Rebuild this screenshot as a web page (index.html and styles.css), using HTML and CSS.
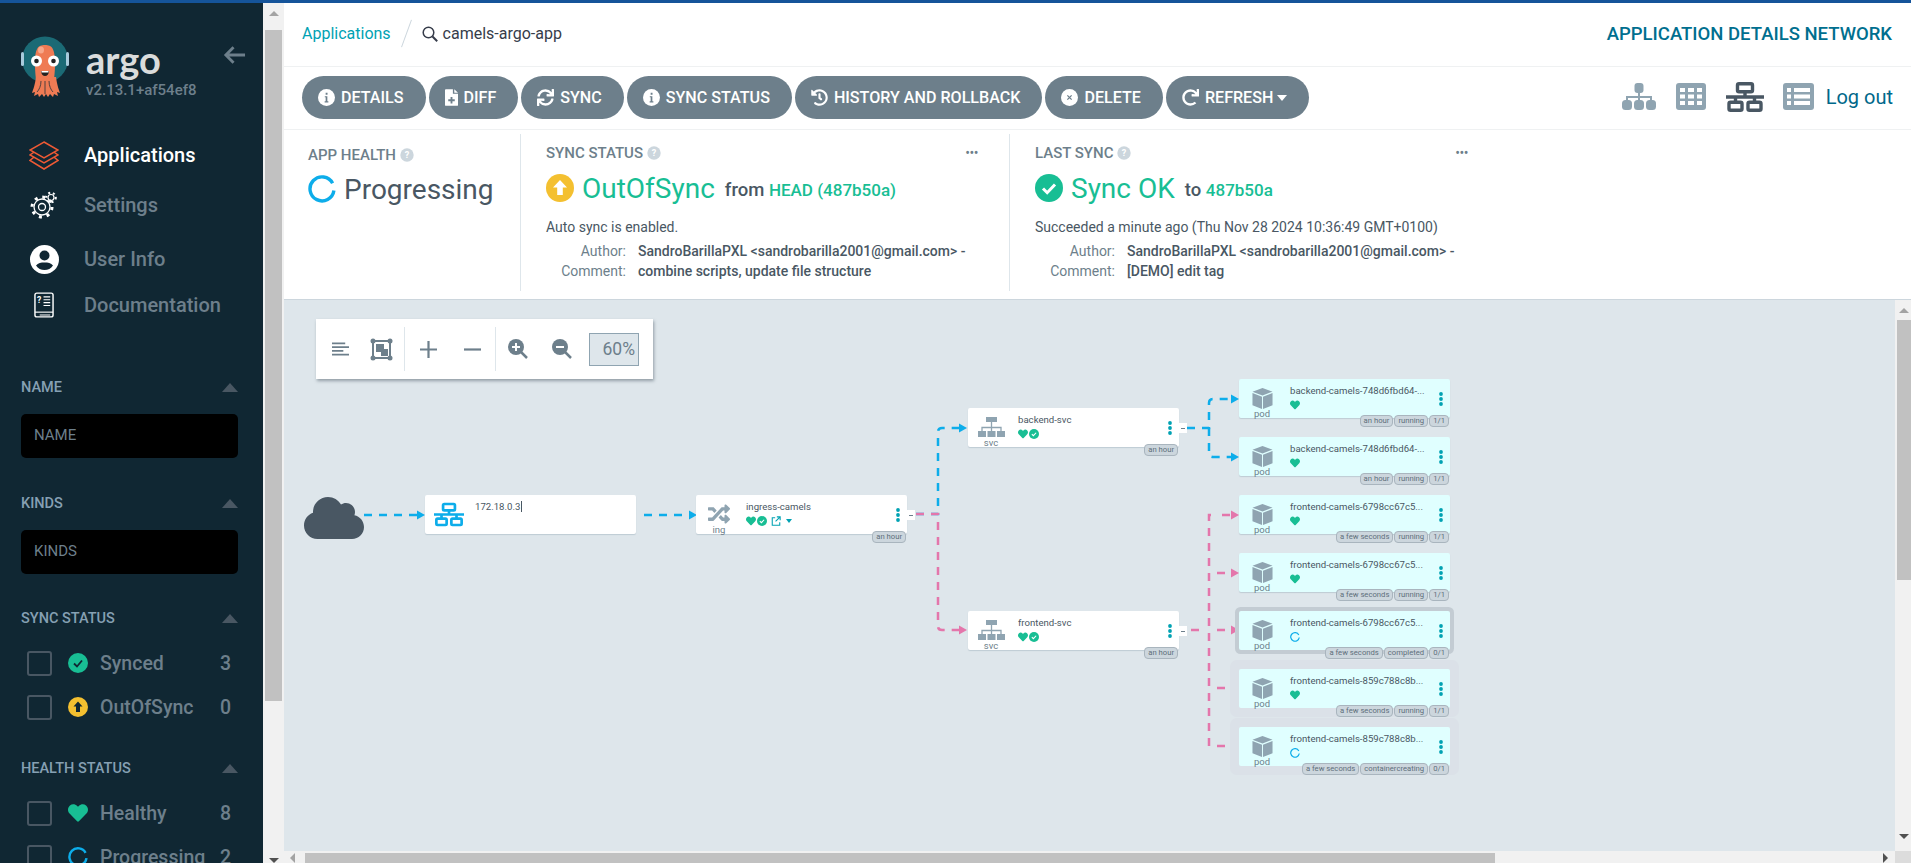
FILE: index.html
```html
<!DOCTYPE html>
<html lang="en">

<head>
    <meta charset="UTF-8">
    <title>camels-argo-app - Argo CD</title>
    <link rel="stylesheet" href="styles.css">
</head>

<body>
    <svg class="icon-defs" xmlns="http://www.w3.org/2000/svg">
        <symbol id="i-heart" viewBox="0 0 512 512"><path d="M462.3 62.6C407.5 15.9 326 24.3 275.7 76.2L256 96.5l-19.7-20.3C186.1 24.3 104.5 15.9 49.7 62.6c-62.8 53.6-66.1 149.8-9.9 207.9l193.5 199.8c12.5 12.9 32.8 12.9 45.3 0l193.5-199.8c56.3-58.1 53-154.3-9.8-207.9z"/></symbol>
        <symbol id="i-check" viewBox="0 0 28 28"><circle cx="14" cy="14" r="14"/><path d="M8 14.5l4.2 4.2L20 10.5" fill="none" stroke="#fff" stroke-width="3"/></symbol>
        <symbol id="i-info" viewBox="0 0 20 20"><circle cx="10" cy="10" r="10" fill="#fff"/><path d="M8 8.5h3v6h1.2v1.3H7.8v-1.3H9V9.8H8zM9 4.5h2.2v2.2H9z" fill="#6d7f8b"/></symbol>
        <symbol id="i-help" viewBox="0 0 14 14"><circle cx="7" cy="7" r="6.7" fill="#ccd6dd"/><text x="7" y="10.3" text-anchor="middle" font-size="9" font-weight="700" fill="#fff">?</text></symbol>
        <symbol id="i-spinner" viewBox="0 0 28 28"><path d="M24.600 8.200A12 12 0 1 0 25.900 15.500" fill="none" stroke="#0dadea" stroke-width="3.400"/></symbol>
        <symbol id="i-sync" viewBox="0 0 512 512"><path d="M440.65 12.57l4 82.77A247.16 247.16 0 0 0 255.83 8C134.73 8 33.91 94.92 12.29 209.82A12 12 0 0 0 24.09 224h49.05a12 12 0 0 0 11.67-9.26 175.91 175.91 0 0 1 317-56.94l-101.46-4.86a12 12 0 0 0-12.57 12v47.41a12 12 0 0 0 12 12H500a12 12 0 0 0 12-12V12a12 12 0 0 0-12-12h-47.37a12 12 0 0 0-11.98 12.57zM255.83 432a175.61 175.61 0 0 1-146-77.8l101.8 4.87a12 12 0 0 0 12.57-12v-47.4a12 12 0 0 0-12-12H12a12 12 0 0 0-12 12V500a12 12 0 0 0 12 12h47.35a12 12 0 0 0 12-12.6l-4.15-82.57A247.17 247.17 0 0 0 255.83 504c121.11 0 221.93-86.92 243.55-201.82a12 12 0 0 0-11.8-14.18h-49.05a12 12 0 0 0-11.67 9.26A175.86 175.86 0 0 1 255.83 432z"/></symbol>
        <symbol id="i-redo" viewBox="0 0 512 512"><path d="M500.33 0h-47.41a12 12 0 0 0-12 12.57l4 82.76A247.42 247.42 0 0 0 256 8C119.34 8 7.9 119.53 8 256.19 8.1 393.07 119.1 504 256 504a247.1 247.1 0 0 0 166.18-63.91 12 12 0 0 0 .48-17.43l-34-34a12 12 0 0 0-16.38-.55A176 176 0 1 1 402.1 157.8l-101.53-4.87a12 12 0 0 0-12.57 12v47.41a12 12 0 0 0 12 12h200.33a12 12 0 0 0 12-12V12a12 12 0 0 0-12-12z"/></symbol>
        <symbol id="i-history" viewBox="0 0 512 512"><path d="M504 255.531c.253 136.64-111.18 248.372-247.82 248.468-59.015.042-113.223-20.53-155.822-54.911-11.077-8.94-11.905-25.541-1.839-35.607l11.267-11.267c8.609-8.609 22.353-9.551 31.891-1.984C173.062 425.135 212.781 440 256 440c101.705 0 184-82.311 184-184 0-101.705-82.311-184-184-184-48.814 0-93.149 18.969-126.068 49.932l50.754 50.754c10.08 10.08 2.941 27.314-11.313 27.314H24c-8.837 0-16-7.163-16-16V38.627c0-14.254 17.234-21.393 27.314-11.314l49.372 49.372C129.209 34.136 189.552 8 256 8c136.81 0 247.747 110.78 248 247.531zm-180.912 78.784l9.823-12.63c8.138-10.463 6.253-25.542-4.21-33.679L288 256.349V152c0-13.255-10.745-24-24-24h-16c-13.255 0-24 10.745-24 24v135.651l65.409 50.874c10.463 8.137 25.541 6.253 33.679-4.21z"/></symbol>
        <symbol id="i-network" viewBox="0 0 38 30"><g fill="none" stroke="currentColor" stroke-width="3.400"><rect x="11.5" y="1.7" width="15" height="8" rx="1.5"/><rect x="3" y="20.3" width="13" height="8" rx="1.5"/><rect x="22" y="20.3" width="13" height="8" rx="1.5"/><path d="M19 10v5M0 15h38M9.5 15v5M28.5 15v5"/></g></symbol>
        <symbol id="i-sitemap" viewBox="0 0 27 20"><path d="M8 0h11v5H8zM0 14h8v6H0zM9.500 14h8v6h-8zM19 14h8v6h-8z"/><path d="M13.500 5v9M4 14v-3.500h19V14" fill="none" stroke="currentColor" stroke-width="1.300"/></symbol>
        <symbol id="i-random" viewBox="0 0 512 512"><path d="M504.971 359.029c9.373 9.373 9.373 24.569 0 33.941l-80 79.984c-15.01 15.01-40.971 4.49-40.971-16.971V416h-58.785a12.004 12.004 0 0 1-8.773-3.812l-70.556-75.596 53.333-57.143L352 336h32v-39.981c0-21.438 25.943-31.998 40.971-16.971l80 79.981zM12 176h84l52.781 56.551 53.333-57.143-70.556-75.596A11.999 11.999 0 0 0 122.785 96H12c-6.627 0-12 5.373-12 12v56c0 6.627 5.373 12 12 12zm372 0v39.984c0 21.46 25.961 31.98 40.971 16.971l80-79.984c9.373-9.373 9.373-24.569 0-33.941l-80-79.981C409.943 24.021 384 34.582 384 56.019V96h-58.785a12.004 12.004 0 0 0-8.773 3.812L96 336H12c-6.627 0-12 5.373-12 12v56c0 6.627 5.373 12 12 12h110.785c3.326 0 6.503-1.381 8.773-3.812L352 176h32z"/></symbol>
        <symbol id="i-cube" viewBox="0 0 21 22"><path d="M10.500 0L21 3.800 10.500 7.800 0 3.800zM0 5.300l10 3.800V22L0 18zM11 9.100l10-3.800V18l-10 4z"/></symbol>
        <symbol id="i-dots" viewBox="0 0 4 14"><circle cx="2" cy="2" r="1.900"/><circle cx="2" cy="7" r="1.900"/><circle cx="2" cy="12" r="1.900"/></symbol>
    </svg>

    <div class="top-line"></div>
    <div class="app">
        <aside class="sidebar">
            <div class="logo-row">
                <svg class="mascot" viewBox="0 0 48 62">
                    <circle cx="24" cy="23.500" r="23" fill="#1b6a75"/>
                    <rect x="0" y="16" width="3" height="14" rx="1.500" fill="#a9cbdc"/>
                    <rect x="45" y="16" width="3" height="14" rx="1.500" fill="#a9cbdc"/>
                    <path d="M14 28C14 12 17 9 24 9s10 3 10 19c0 9-1 14-1 16H15c0-2-1-7-1-16z" fill="#ef7b54"/>
                    <ellipse cx="20" cy="14" rx="3" ry="3.500" fill="#f7a78a"/>
                    <path d="M15 41c-1 8-3 13-4 16l3-1-1 4 4-2 1 3 3-3 2 3 2-3 2 3 2-3 3 3 1-3 4 2-1-4 3 1c-1-3-3-8-4-16z" fill="#ef7b54"/>
                    <path d="M20 45c0 5-2 9-4 11M24 45v13M28 45c0 5 2 9 4 11" fill="none" stroke="#102733" stroke-width="0.700"/>
                    <circle cx="15.500" cy="25" r="5.500" fill="#fff"/>
                    <circle cx="32.500" cy="25" r="5.500" fill="#fff"/>
                    <circle cx="15.500" cy="25" r="2.300" fill="#222"/>
                    <circle cx="32.500" cy="25" r="2.300" fill="#222"/>
                    <path d="M20 35h8c0 3-2 5-4 5s-4-2-4-5z" fill="#222"/>
                    <path d="M20.500 35h7v1.500h-7z" fill="#fff"/>
                </svg>
                <div class="logo-text">
                    <div class="logo-word">argo</div>
                    <div class="logo-version">v2.13.1+af54ef8</div>
                </div>
                <svg class="collapse-arrow" viewBox="0 0 24 20"><path d="M23 10H3M11 2l-8 8 8 8" fill="none" stroke="currentColor" stroke-width="3"/></svg>
            </div>

            <nav class="nav">
                <a class="nav-item nav-item--active">
                    <span class="nav-icon">
                        <svg width="30" height="29" viewBox="0 0 30 29"><path d="M15 1l14 8-14 8-14-8zM4.500 11.500L1 14l14 8 14-8-3.500-2.500M4.500 16.500L1 19.500l14 8.500 14-8.500-3.500-3" fill="none" stroke="#ef5a35" stroke-width="1.500"/></svg>
                    </span>
                    Applications
                </a>
                <a class="nav-item">
                    <span class="nav-icon">
                        <svg width="28" height="28" viewBox="0 0 28 28"><g fill="none" stroke="#fff"><circle cx="12" cy="16" r="8" stroke-width="1.300"/><circle cx="12" cy="16" r="10" stroke-width="3" stroke-dasharray="3 4.850"/><circle cx="12" cy="16" r="3.500" stroke-width="1.300"/><circle cx="21" cy="6.500" r="3" stroke-width="1.200"/><circle cx="21" cy="6.500" r="4.800" stroke-width="2" stroke-dasharray="2 2.800"/></g></svg>
                    </span>
                    Settings
                </a>
                <a class="nav-item nav-item--user">
                    <span class="nav-icon">
                        <svg width="29" height="29" viewBox="0 0 29 29"><circle cx="14.500" cy="14.500" r="14.500" fill="#fff"/><circle cx="14.500" cy="10.500" r="5" fill="#102733"/><path d="M6 20.500c2-2.500 5-3 8.500-3s6.500.5 8.500 3c-2 3-5 4.500-8.500 4.500S8 23.500 6 20.500z" fill="#102733"/></svg>
                    </span>
                    User Info
                </a>
                <a class="nav-item nav-item--docs">
                    <span class="nav-icon">
                        <svg width="20" height="26" viewBox="0 0 21 27"><rect x="1" y="1" width="19" height="25" rx="2" fill="none" stroke="#fff" stroke-width="1.500"/><path d="M1 21h19" stroke="#fff" stroke-width="1.200"/><path d="M10 5h7M10 8h7M10 11h7M10 14h7M6 24h11" stroke="#fff" stroke-width="1.200"/><text x="5.500" y="11" text-anchor="middle" font-size="9" font-weight="700" fill="#fff">?</text></svg>
                    </span>
                    Documentation
                </a>
            </nav>

            <section class="filter filter--name">
                <div class="filter-head"><span>NAME</span><i class="caret-up"></i></div>
                <div class="filter-input">NAME</div>
            </section>
            <section class="filter filter--kinds">
                <div class="filter-head"><span>KINDS</span><i class="caret-up"></i></div>
                <div class="filter-input">KINDS</div>
            </section>
            <section class="filter filter--sync">
                <div class="filter-head"><span>SYNC STATUS</span><i class="caret-up"></i></div>
                <div class="filter-rows">
                    <div class="filter-row">
                        <i class="checkbox"></i>
                        <svg class="filter-icon" viewBox="0 0 20 20"><circle cx="10" cy="10" r="10" fill="#18be94"/><path d="M6 10.500l3 3 5-6" fill="none" stroke="#102733" stroke-width="1.800"/></svg>
                        <span class="filter-label">Synced</span><span class="filter-count">3</span>
                    </div>
                    <div class="filter-row">
                        <i class="checkbox"></i>
                        <svg class="filter-icon" viewBox="0 0 20 20"><circle cx="10" cy="10" r="10" fill="#f4c030"/><path d="M10 4.500l4.500 5H12V15H8V9.500H5.500z" fill="#102733"/></svg>
                        <span class="filter-label">OutOfSync</span><span class="filter-count">0</span>
                    </div>
                </div>
            </section>
            <section class="filter filter--health">
                <div class="filter-head"><span>HEALTH STATUS</span><i class="caret-up"></i></div>
                <div class="filter-rows">
                    <div class="filter-row">
                        <i class="checkbox"></i>
                        <svg class="filter-icon filter-icon--green"><use href="#i-heart"/></svg>
                        <span class="filter-label">Healthy</span><span class="filter-count">8</span>
                    </div>
                    <div class="filter-row">
                        <i class="checkbox"></i>
                        <svg class="filter-icon"><use href="#i-spinner"/></svg>
                        <span class="filter-label">Progressing</span><span class="filter-count">2</span>
                    </div>
                </div>
            </section>
        </aside>

        <div class="side-scroll">
            <div class="arrow-up"></div>
            <div class="side-thumb"></div>
            <div class="arrow-down side-arrow-down"></div>
        </div>

        <main class="main">
            <header class="topbar">
                <div class="crumbs">
                    <a class="crumb-link">Applications</a>
                    <span class="crumb-sep"></span>
                    <svg class="crumb-search" viewBox="0 0 16 16"><circle cx="6.500" cy="6.500" r="5.300" fill="none" stroke="currentColor" stroke-width="1.500"/><path d="M10.500 10.500l4.700 4.700" stroke="currentColor" stroke-width="2"/></svg>
                    <span class="crumb-current">camels-argo-app</span>
                </div>
                <div class="page-title">APPLICATION DETAILS NETWORK</div>
            </header>

            <div class="toolbar">
                <div class="actions">
                    <button class="btn"><svg class="btn-icon"><use href="#i-info"/></svg>DETAILS</button>
                    <button class="btn">
                        <svg class="btn-icon btn-icon--file" viewBox="0 0 14 18"><path d="M1 0h7.500v5H14v12a1 1 0 0 1-1 1H1a1 1 0 0 1-1-1V1a1 1 0 0 1 1-1zM10 0l4 3.800H10z" fill="#fff"/><path d="M6 8.500h2v2.500h2.500v2H8v2.500H6V13H3.500v-2H6z" fill="#6d7f8b"/></svg>
                        DIFF
                    </button>
                    <button class="btn"><svg class="btn-icon"><use href="#i-sync"/></svg>SYNC</button>
                    <button class="btn"><svg class="btn-icon"><use href="#i-info"/></svg>SYNC STATUS</button>
                    <button class="btn"><svg class="btn-icon"><use href="#i-history"/></svg>HISTORY AND ROLLBACK</button>
                    <button class="btn">
                        <svg class="btn-icon" viewBox="0 0 20 20"><circle cx="10" cy="10" r="10" fill="#fff"/><path d="M7.500 7.500l5 5M12.500 7.500l-5 5" stroke="#6d7f8b" stroke-width="1.500"/></svg>
                        DELETE
                    </button>
                    <button class="btn"><svg class="btn-icon"><use href="#i-redo"/></svg>REFRESH<i class="caret-down"></i></button>
                </div>
                <div class="views">
                    <svg class="view-icon view-tree" viewBox="0 0 34 27">
                        <rect x="12.500" y="0" width="9" height="10" rx="3"/>
                        <path d="M17 9v9M5 18v-4h24v4" fill="none" stroke="currentColor" stroke-width="2"/>
                        <rect x="0" y="17" width="10" height="10" rx="3.500"/>
                        <rect x="12" y="17" width="10" height="10" rx="3.500"/>
                        <rect x="24" y="17" width="10" height="10" rx="3.500"/>
                    </svg>
                    <svg class="view-icon view-grid" viewBox="0 0 30 27">
                        <rect width="30" height="27" rx="3"/>
                        <path d="M4 5h5v4H4zM12 5h6v4h-6zM21 5h5v4h-5zM4 11.500h5v4H4zM12 11.500h6v4h-6zM21 11.500h5v4h-5zM4 18h5v4H4zM12 18h6v4h-6zM21 18h5v4h-5z" fill="#fff"/>
                    </svg>
                    <svg class="view-icon view-net"><use href="#i-network"/></svg>
                    <svg class="view-icon view-list" viewBox="0 0 31 27">
                        <rect width="31" height="27" rx="3"/>
                        <path d="M4 5h4v4H4zM11 5h16v4H11zM4 11.500h4v4H4zM11 11.500h16v4H11zM4 18h4v4H4zM11 18h16v4H11z" fill="#fff"/>
                    </svg>
                    <a class="logout">Log out</a>
                </div>
            </div>

            <div class="status">
                <section class="status-panel status-panel--health">
                    <div class="status-title">APP HEALTH<svg class="help"><use href="#i-help"/></svg></div>
                    <div class="status-main status-main--health">
                        <svg class="status-icon"><use href="#i-spinner"/></svg>
                        <span class="status-big status-big--dark">Progressing</span>
                    </div>
                </section>
                <section class="status-panel status-panel--wide">
                    <div class="status-head">
                        <div class="status-title">SYNC STATUS<svg class="help"><use href="#i-help"/></svg></div>
                        <span class="more">•••</span>
                    </div>
                    <div class="status-main">
                        <svg class="status-icon" viewBox="0 0 28 28"><circle cx="14" cy="14" r="14" fill="#f4c030"/><path d="M14 6l7 7.500h-4.200V21h-5.600v-7.500H7z" fill="#fff"/></svg>
                        <span class="status-big">OutOfSync</span>
                        <span class="status-side">from <a>HEAD (487b50a)</a></span>
                    </div>
                    <div class="status-note">Auto sync is enabled.</div>
                    <dl class="meta">
                        <dt>Author:</dt>
                        <dd>SandroBarillaPXL &lt;sandrobarilla2001@gmail.com&gt; -</dd>
                        <dt>Comment:</dt>
                        <dd>combine scripts, update file structure</dd>
                    </dl>
                </section>
                <section class="status-panel status-panel--wide status-panel--last">
                    <div class="status-head">
                        <div class="status-title">LAST SYNC<svg class="help"><use href="#i-help"/></svg></div>
                        <span class="more">•••</span>
                    </div>
                    <div class="status-main">
                        <svg class="status-icon status-icon--ok"><use href="#i-check"/></svg>
                        <span class="status-big">Sync OK</span>
                        <span class="status-side">to <a>487b50a</a></span>
                    </div>
                    <div class="status-note">Succeeded a minute ago (Thu Nov 28 2024 10:36:49 GMT+0100)</div>
                    <dl class="meta">
                        <dt>Author:</dt>
                        <dd>SandroBarillaPXL &lt;sandrobarilla2001@gmail.com&gt; -</dd>
                        <dt>Comment:</dt>
                        <dd>[DEMO] edit tag</dd>
                    </dl>
                </section>
            </div>

            <div class="graph-row">
                <div class="graph">
                    <svg class="edges" viewBox="284 300 1611 551">
                        <g class="edge-blue">
                            <path d="M364 515H417"/>
                            <path d="M644 515H689"/>
                            <path d="M916 514H938V432q0-4 4-4H959"/>
                            <path d="M1187 428H1209V403q0-4 4-4H1231"/>
                            <path d="M1209 428V453q0 4 4 4H1231"/>
                            <polygon points="425,515 417,510.500 417,519.500"/>
                            <polygon points="697,515 689,510.500 689,519.500"/>
                            <polygon points="967,428 959,423.500 959,432.500"/>
                            <polygon points="1239,399 1231,394.500 1231,403.500"/>
                            <polygon points="1239,457 1231,452.500 1231,461.500"/>
                        </g>
                        <g class="edge-pink">
                            <path d="M916 514H938V626q0 4 4 4H959"/>
                            <path d="M1191 630H1203"/>
                            <path d="M1209 746V515H1214"/>
                            <path d="M1222 515H1230M1217 573H1225M1217 630H1225M1217 688H1225M1217 746H1225"/>
                            <polygon points="967,630 959,625.500 959,634.500"/>
                            <polygon points="1239,515 1231,510.500 1231,519.500"/>
                            <polygon points="1239,573 1231,568.500 1231,577.500"/>
                            <polygon points="1239,630 1231,625.500 1231,634.500"/>
                            <polygon points="1239,688 1231,683.500 1231,692.500"/>
                            <polygon points="1239,746 1231,741.500 1231,750.500"/>
                        </g>
                    </svg>

                    <div class="graph-tools">
                        <svg class="tool tool--lines" viewBox="0 0 18 14"><path d="M0 1h14M0 5h18M0 9h12M0 13h18" stroke="currentColor" stroke-width="2" fill="none"/></svg>
                        <svg class="tool tool--frame" viewBox="0 0 23 23"><path d="M3 3h17v17H3z" fill="none" stroke="currentColor" stroke-width="2"/><circle cx="3" cy="3" r="2.500"/><circle cx="20" cy="3" r="2.500"/><circle cx="3" cy="20" r="2.500"/><circle cx="20" cy="20" r="2.500"/><path d="M6 6h8v8H6zM11 11h7v7h-7z"/></svg>
                        <i class="tool-sep"></i>
                        <svg class="tool tool--sign" viewBox="0 0 17 17"><path d="M8.500 0v17M0 8.500h17" stroke="currentColor" stroke-width="2.200"/></svg>
                        <svg class="tool tool--sign" viewBox="0 0 17 17"><path d="M0 8.500h17" stroke="currentColor" stroke-width="2.200"/></svg>
                        <i class="tool-sep tool-sep--second"></i>
                        <svg class="tool tool--zoom" viewBox="0 0 20 20"><circle cx="8" cy="8" r="8"/><path d="M13 13l6 6" stroke="currentColor" stroke-width="2.500"/><path d="M8 4v8M4 8h8" stroke="#fff" stroke-width="2"/></svg>
                        <svg class="tool tool--zoom" viewBox="0 0 20 20"><circle cx="8" cy="8" r="8"/><path d="M13 13l6 6" stroke="currentColor" stroke-width="2.500"/><path d="M4 8h8" stroke="#fff" stroke-width="2"/></svg>
                        <div class="zoom-value">60%</div>
                    </div>

                    <svg class="cloud" viewBox="0 32 640 448"><path d="M537.6 226.6c4.1-10.7 6.4-22.4 6.4-34.6 0-53-43-96-96-96-19.7 0-38.1 6-53.3 16.2C367 64.2 315.3 32 256 32c-88.4 0-160 71.6-160 160 0 2.7.1 5.4.2 8.1C40.2 219.8 0 273.2 0 336c0 79.500 64.500 144 144 144h368c70.700 0 128-57.300 128-128 0-61.900-44-113.600-102.400-125.400z"/></svg>

                    <div class="node node--ip">
                        <div class="node-kind"><svg class="kind-net"><use href="#i-network"/></svg></div>
                        <div class="node-main"><div class="node-name"><span class="ip-text">172.18.0.3</span></div></div>
                    </div>

                    <div class="node node--ingress">
                        <div class="node-kind"><svg class="kind-icon kind-icon--random"><use href="#i-random"/></svg><span>ing</span></div>
                        <div class="node-main">
                            <div class="node-name">ingress-camels</div>
                            <div class="node-status">
                                <svg class="st st--green"><use href="#i-heart"/></svg>
                                <svg class="st st--green"><use href="#i-check"/></svg>
                                <svg class="st st--link" viewBox="0 0 12 12"><path d="M5 2H1.500v9h9V7.500M7 1h4v4M11 1L5.500 6.500" fill="none" stroke="currentColor" stroke-width="1.300"/></svg>
                                <i class="st-caret"></i>
                            </div>
                        </div>
                        <svg class="node-dots"><use href="#i-dots"/></svg>
                        <i class="node-toggle"></i>
                        <div class="tags"><span>an hour</span></div>
                    </div>

                    <div class="node node--backend-svc">
                        <div class="node-kind"><svg class="kind-icon kind-icon--svc"><use href="#i-sitemap"/></svg><span>svc</span></div>
                        <div class="node-main">
                            <div class="node-name">backend-svc</div>
                            <div class="node-status"><svg class="st st--green"><use href="#i-heart"/></svg><svg class="st st--green"><use href="#i-check"/></svg></div>
                        </div>
                        <svg class="node-dots"><use href="#i-dots"/></svg>
                        <i class="node-toggle"></i>
                        <div class="tags"><span>an hour</span></div>
                    </div>

                    <div class="node node--frontend-svc">
                        <div class="node-kind"><svg class="kind-icon kind-icon--svc"><use href="#i-sitemap"/></svg><span>svc</span></div>
                        <div class="node-main">
                            <div class="node-name">frontend-svc</div>
                            <div class="node-status"><svg class="st st--green"><use href="#i-heart"/></svg><svg class="st st--green"><use href="#i-check"/></svg></div>
                        </div>
                        <svg class="node-dots"><use href="#i-dots"/></svg>
                        <i class="node-toggle"></i>
                        <div class="tags"><span>an hour</span></div>
                    </div>

                    <div class="pods">
                        <div class="node node--pod">
                            <div class="node-kind"><svg class="kind-icon kind-icon--cube"><use href="#i-cube"/></svg><span>pod</span></div>
                            <div class="node-main">
                                <div class="node-name">backend-camels-748d6fbd64-...</div>
                                <div class="node-status"><svg class="st st--green"><use href="#i-heart"/></svg></div>
                            </div>
                            <svg class="node-dots"><use href="#i-dots"/></svg>
                            <div class="tags"><span>an hour</span><span>running</span><span>1/1</span></div>
                        </div>
                        <div class="node node--pod">
                            <div class="node-kind"><svg class="kind-icon kind-icon--cube"><use href="#i-cube"/></svg><span>pod</span></div>
                            <div class="node-main">
                                <div class="node-name">backend-camels-748d6fbd64-...</div>
                                <div class="node-status"><svg class="st st--green"><use href="#i-heart"/></svg></div>
                            </div>
                            <svg class="node-dots"><use href="#i-dots"/></svg>
                            <div class="tags"><span>an hour</span><span>running</span><span>1/1</span></div>
                        </div>
                        <div class="node node--pod">
                            <div class="node-kind"><svg class="kind-icon kind-icon--cube"><use href="#i-cube"/></svg><span>pod</span></div>
                            <div class="node-main">
                                <div class="node-name">frontend-camels-6798cc67c5...</div>
                                <div class="node-status"><svg class="st st--green"><use href="#i-heart"/></svg></div>
                            </div>
                            <svg class="node-dots"><use href="#i-dots"/></svg>
                            <div class="tags"><span>a few seconds</span><span>running</span><span>1/1</span></div>
                        </div>
                        <div class="node node--pod">
                            <div class="node-kind"><svg class="kind-icon kind-icon--cube"><use href="#i-cube"/></svg><span>pod</span></div>
                            <div class="node-main">
                                <div class="node-name">frontend-camels-6798cc67c5...</div>
                                <div class="node-status"><svg class="st st--green"><use href="#i-heart"/></svg></div>
                            </div>
                            <svg class="node-dots"><use href="#i-dots"/></svg>
                            <div class="tags"><span>a few seconds</span><span>running</span><span>1/1</span></div>
                        </div>
                        <div class="node node--pod node--selected">
                            <div class="node-kind"><svg class="kind-icon kind-icon--cube"><use href="#i-cube"/></svg><span>pod</span></div>
                            <div class="node-main">
                                <div class="node-name">frontend-camels-6798cc67c5...</div>
                                <div class="node-status"><svg class="st"><use href="#i-spinner"/></svg></div>
                            </div>
                            <svg class="node-dots"><use href="#i-dots"/></svg>
                            <div class="tags"><span>a few seconds</span><span>completed</span><span>0/1</span></div>
                        </div>
                        <div class="node node--pod node--band">
                            <div class="node-kind"><svg class="kind-icon kind-icon--cube"><use href="#i-cube"/></svg><span>pod</span></div>
                            <div class="node-main">
                                <div class="node-name">frontend-camels-859c788c8b...</div>
                                <div class="node-status"><svg class="st st--green"><use href="#i-heart"/></svg></div>
                            </div>
                            <svg class="node-dots"><use href="#i-dots"/></svg>
                            <div class="tags"><span>a few seconds</span><span>running</span><span>1/1</span></div>
                        </div>
                        <div class="node node--pod node--band">
                            <div class="node-kind"><svg class="kind-icon kind-icon--cube"><use href="#i-cube"/></svg><span>pod</span></div>
                            <div class="node-main">
                                <div class="node-name">frontend-camels-859c788c8b...</div>
                                <div class="node-status"><svg class="st"><use href="#i-spinner"/></svg></div>
                            </div>
                            <svg class="node-dots"><use href="#i-dots"/></svg>
                            <div class="tags"><span>a few seconds</span><span>containercreating</span><span>0/1</span></div>
                        </div>
                    </div>
                </div>

                <div class="graph-scroll">
                    <div class="arrow-up"></div>
                    <div class="graph-thumb"></div>
                    <div class="arrow-down graph-arrow-down"></div>
                </div>
            </div>

            <div class="hscroll">
                <i class="arrow-left"></i>
                <div class="hscroll-thumb"></div>
                <i class="arrow-right"></i>
                <div class="hscroll-corner"></div>
            </div>
        </main>
    </div>
</body>

</html>
```

FILE: styles.css
```css
* {
    box-sizing: border-box;
}

html,
body {
    height: 100%;
    margin: 0;
    overflow: hidden;
}

body {
    font-family: 'Roboto', 'Liberation Sans', sans-serif;
    color: #495763;
    background: #fff;
}

.icon-defs {
    display: none;
}

.top-line {
    height: 3px;
    background: #15549a;
}

.app {
    display: flex;
    height: 860px;
}

/* sidebar */
.sidebar {
    width: 263px;
    height: 860px;
    overflow: hidden;
    flex-shrink: 0;
    background: #102733;
    color: #6d7f8b;
}

.logo-row {
    display: flex;
    padding: 33px 17px 0 21px;
    height: 127px;
}

.mascot {
    width: 48px;
    height: 62px;
    flex-shrink: 0;
}

.logo-text {
    margin-left: 17px;
    flex: 1;
}

.logo-word {
    font-family: 'Lato', sans-serif;
    font-size: 38px;
    font-weight: 700;
    line-height: 38px;
    margin-top: 4px;
    color: #dadcdc;
}

.logo-version {
    font-size: 15px;
    font-weight: 500;
    line-height: 18px;
    margin-top: 3px;
    color: #6d7f8b;
}

.collapse-arrow {
    width: 23px;
    height: 20px;
    margin-top: 9px;
    color: #6d7f8b;
}

.nav-item {
    display: flex;
    align-items: center;
    height: 50px;
    padding-left: 28px;
    font-size: 20px;
    font-weight: 500;
}

.nav-item--active {
    color: #fff;
}

.nav-item--user {
    margin-top: 4px;
}

.nav-item--docs {
    margin-top: -4px;
}

.nav-icon {
    display: flex;
    justify-content: center;
    width: 32px;
    margin-right: 24px;
}

.filter {
    padding: 0 25px 0 21px;
}

.filter--name {
    margin-top: 47px;
}

.filter--kinds {
    margin-top: 35px;
}

.filter--sync {
    margin-top: 34px;
}

.filter--health {
    margin-top: 29px;
}

.filter-head {
    display: flex;
    justify-content: space-between;
    align-items: center;
    height: 20px;
    font-size: 14.5px;
    font-weight: 500;
    color: #86a0b3;
}

.caret-up {
    width: 0;
    height: 0;
    border-left: 8px solid transparent;
    border-right: 8px solid transparent;
    border-bottom: 9px solid #495763;
}

.filter-input {
    height: 44px;
    margin-top: 17px;
    padding-left: 13px;
    line-height: 42px;
    font-size: 15px;
    background: #000;
    border-radius: 5px;
    color: #6d7f8b;
}

.filter-rows {
    margin-top: 13px;
}

.filter-row {
    display: flex;
    align-items: center;
    height: 44px;
    padding: 0 7px 0 6px;
    font-size: 19.5px;
    font-weight: 500;
}

.checkbox {
    width: 25px;
    height: 25px;
    border: 2px solid #495763;
    border-radius: 3px;
    flex-shrink: 0;
}

.filter-icon {
    width: 20px;
    height: 20px;
    margin: 0 12px 0 16px;
    flex-shrink: 0;
}

.filter-icon--green {
    fill: #18be94;
}

.filter-label {
    flex: 1;
}

.side-scroll {
    position: relative;
    width: 21px;
    flex-shrink: 0;
    padding-left: 2px;
    background: #f1f1f1;
}

.side-thumb {
    width: 17px;
    height: 671px;
    margin-top: 14px;
    background: #c1c1c1;
}

.side-scroll .arrow-up {
    margin: 8px 0 0 4px;
}

.side-arrow-down {
    margin: 157px 0 0 4px;
}

.arrow-up {
    width: 0;
    height: 0;
    border-left: 5px solid transparent;
    border-right: 5px solid transparent;
    border-bottom: 5px solid #a3a3a3;
}

.arrow-down {
    width: 0;
    height: 0;
    border-left: 5px solid transparent;
    border-right: 5px solid transparent;
    border-top: 5px solid #505050;
}

/* main column */
.main {
    display: flex;
    flex-direction: column;
    flex: 1;
    min-width: 0;
}

.topbar {
    display: flex;
    justify-content: space-between;
    align-items: center;
    height: 64px;
    padding: 0 19px 2px 18px;
    border-bottom: 1px solid #eff1f2;
}

.crumbs {
    display: flex;
    align-items: center;
    font-size: 16px;
}

.crumb-link {
    color: #00a2b3;
}

.crumb-sep {
    width: 1px;
    height: 29px;
    margin: 0 15px 0 15px;
    background: #ccd6dd;
    transform: rotate(20deg);
}

.crumb-search {
    width: 16px;
    height: 16px;
    margin-right: 5px;
    color: #363c4a;
}

.crumb-current {
    color: #363c4a;
}

.page-title {
    font-size: 18.5px;
    font-weight: 500;
    color: #006f8f;
}

.toolbar {
    display: flex;
    justify-content: space-between;
    align-items: center;
    height: 63px;
    padding: 0 18px 1px 18px;
    border-bottom: 1px solid #eff1f2;
}

.actions {
    display: flex;
    gap: 3px;
}

.btn {
    display: flex;
    align-items: center;
    height: 43px;
    padding: 0 22px 0 16px;
    border: 0;
    border-radius: 22px;
    background: #6d7f8b;
    color: #fff;
    font-family: inherit;
    font-size: 16.1px;
    font-weight: 500;
}

.btn-icon {
    width: 17px;
    height: 17px;
    margin-right: 6px;
    fill: #fff;
}

.btn-icon--file {
    width: 13px;
}

.caret-down {
    width: 0;
    height: 0;
    margin-left: 4px;
    border-left: 5px solid transparent;
    border-right: 5px solid transparent;
    border-top: 6px solid #fff;
}

.views {
    display: flex;
    align-items: center;
    padding-bottom: 2px;
}

.view-icon {
    fill: #8fa4b1;
    color: #8fa4b1;
    height: 27px;
}

.view-tree {
    width: 34px;
    margin-right: 20px;
}

.view-grid {
    width: 30px;
    margin-right: 20px;
}

.view-net {
    width: 38px;
    height: 30px;
    margin-right: 19px;
    color: #495763;
}

.view-list {
    width: 31px;
    margin-right: 12px;
}

.logout {
    font-size: 20px;
    color: #00688a;
}

/* status panels */
.status {
    display: flex;
    height: 170px;
    padding: 4px 0 8px;
    border-bottom: 1px solid #ccd6dd;
}

.status-panel {
    padding: 9px 31px 0 25px;
    border-right: 1px solid #dee6eb;
}

.status-panel--health {
    width: 237px;
    padding: 11px 0 0 24px;
}

.status-panel--wide {
    width: 489px;
}

.status-panel--last {
    border-right: 0;
}

.status-head {
    display: flex;
    justify-content: space-between;
    align-items: center;
}

.status-title {
    display: flex;
    align-items: center;
    height: 20px;
    font-size: 15px;
    font-weight: 500;
    color: #6d7f8b;
}

.help {
    width: 14px;
    height: 14px;
    margin-left: 4px;
}

.more {
    font-size: 14px;
    line-height: 14px;
    letter-spacing: -0.5px;
    color: #6d7f8b;
}

.status-main {
    display: flex;
    align-items: center;
    height: 34px;
    margin-top: 8px;
}

.status-main--health {
    margin-top: 7px;
}

.status-icon {
    width: 28px;
    height: 28px;
    margin-right: 8px;
    flex-shrink: 0;
}

.status-icon--ok {
    fill: #18be94;
}

.status-big {
    font-size: 28px;
    color: #18be94;
}

.status-big--dark {
    color: #495763;
}

.status-side {
    margin-left: 10px;
    font-size: 18.5px;
    font-weight: 500;
    padding-top: 3px;
    color: #495763;
}

.status-side a {
    font-size: 17px;
    font-weight: 500;
    color: #18be94;
}

.status-note {
    height: 20px;
    margin-top: 12px;
    font-size: 14px;
    line-height: 20px;
}

.meta {
    display: grid;
    grid-template-columns: 80px auto;
    column-gap: 12px;
    margin: 4px 0 0;
    font-size: 14px;
    line-height: 20px;
}

.meta dt {
    text-align: right;
    color: #6d7f8b;
}

.meta dd {
    margin: 0;
    font-weight: 500;
    white-space: nowrap;
}

/* graph */
.graph-row {
    display: flex;
    flex: 1;
    min-height: 0;
}

.graph {
    position: relative;
    flex: 1;
    overflow: hidden;
    background: #dee6eb;
}

.edges {
    position: absolute;
    left: 0;
    top: 0;
    width: 1611px;
    height: 551px;
}

.edges path {
    fill: none;
    stroke-width: 2.5;
    stroke-dasharray: 8 7;
}

.edge-blue path {
    stroke: #0dadea;
}

.edge-blue polygon {
    fill: #0dadea;
}

.edge-pink path {
    stroke: #e476ab;
}

.edge-pink polygon {
    fill: #e476ab;
}

.graph-tools {
    position: absolute;
    left: 32px;
    top: 19px;
    display: flex;
    align-items: center;
    width: 337px;
    height: 60px;
    padding-left: 16px;
    background: #fff;
    box-shadow: 1px 2px 3px rgba(73, 87, 99, 0.5);
    color: #6d7f8b;
    fill: #6d7f8b;
}

.tool {
    flex-shrink: 0;
}

.tool--lines {
    width: 17px;
    height: 14px;
    margin-right: 21px;
}

.tool--frame {
    width: 23px;
    height: 23px;
    margin-right: 11px;
}

.tool-sep {
    width: 1px;
    height: 44px;
    background: #dee6eb;
    margin-right: 15px;
}

.tool--sign {
    width: 17px;
    height: 17px;
    margin-right: 27px;
}

.tool--sign + .tool-sep--second {
    margin-left: -13px;
    margin-right: 12px;
}

.tool--zoom {
    width: 20px;
    height: 20px;
    margin-right: 24px;
}

.tool--zoom + .zoom-value {
    margin-left: -7px;
}

.zoom-value {
    width: 50px;
    height: 33px;
    padding-right: 3px;
    border: 1px solid #8fa4b1;
    background: #dee6eb;
    font-size: 17.5px;
    line-height: 31px;
    text-align: right;
}

.cloud {
    position: absolute;
    left: 20px;
    top: 197px;
    width: 60px;
    height: 42px;
    fill: #495763;
}

.node {
    position: absolute;
    display: flex;
    width: 211px;
    height: 39px;
    background: #fff;
    border-radius: 2px;
    box-shadow: 0 1px 1px rgba(143, 164, 177, 0.4);
}

.node--ip {
    left: 141px;
    top: 195px;
}

.node--ingress {
    left: 412px;
    top: 195px;
}

.node--backend-svc {
    left: 684px;
    top: 108px;
}

.node--frontend-svc {
    left: 684px;
    top: 311px;
}

.pods {
    position: absolute;
    left: 955px;
    top: 79px;
    display: flex;
    flex-direction: column;
    gap: 19px;
}

.node--pod {
    position: relative;
    background: #e0ffff;
}

.node--pod .node-main {
    padding-left: 5px;
}

.node--selected {
    box-shadow: 0 0 0 4px #c3ccd3;
}

.node--band {
    box-shadow: 0 0 0 9px #dbe1e8;
}

.node-kind {
    position: relative;
    width: 46px;
    flex-shrink: 0;
    display: flex;
    justify-content: center;
    font-size: 9.5px;
    color: #6d7f8b;
}

.node-kind span {
    position: absolute;
    top: 30px;
    line-height: 10px;
}

.kind-icon {
    margin-top: 9px;
    fill: #8fa4b1;
    color: #8fa4b1;
}

.kind-icon--random {
    width: 22px;
    height: 22px;
    margin-top: 8px;
}

.kind-icon--svc {
    width: 27px;
    height: 20px;
}

.kind-icon--cube {
    width: 21px;
    height: 21px;
}

.kind-net {
    width: 30px;
    height: 25px;
    margin-top: 7px;
    margin-left: 2px;
    color: #0dadea;
}

.node-main {
    padding: 6px 0 0 4px;
}

.node-name {
    font-size: 9.6px;
    line-height: 12px;
    white-space: nowrap;
}

.ip-text {
    padding-right: 1px;
    border-right: 1px solid #495763;
}

.node-status {
    display: flex;
    align-items: center;
    gap: 1px;
    height: 12px;
    margin-top: 2px;
}

.st {
    width: 10px;
    height: 10px;
}

.st--green {
    fill: #18be94;
}

.st--link {
    width: 10px;
    margin-left: 3px;
    color: #00a2b3;
}

.st-caret {
    width: 0;
    height: 0;
    margin-left: 4px;
    border-left: 3px solid transparent;
    border-right: 3px solid transparent;
    border-top: 4px solid #00a2b3;
}

.node-dots {
    position: absolute;
    right: 7px;
    top: 13px;
    width: 4px;
    height: 14px;
    fill: #00a2b3;
}

.node-toggle {
    position: absolute;
    left: 100%;
    top: 15px;
    width: 8px;
    height: 10px;
    background: #fff;
}

.node-toggle::before {
    content: "";
    position: absolute;
    left: 2px;
    top: 5px;
    width: 4px;
    height: 1px;
    background: #6d7f8b;
}

.tags {
    position: absolute;
    right: 1px;
    top: 36px;
    display: flex;
    gap: 1px;
}

.tags span {
    height: 12px;
    padding: 0 3px;
    border: 1px solid #a9b5be;
    border-radius: 4px;
    background: #ccd6dd;
    font-size: 7.7px;
    line-height: 10px;
    white-space: nowrap;
    color: #5e6f7b;
}

.graph-scroll {
    width: 16px;
    flex-shrink: 0;
    padding-left: 2px;
    background: #f1f1f1;
}

.graph-scroll .arrow-up {
    margin: 8px 0 0 2px;
}

.graph-thumb {
    width: 14px;
    height: 260px;
    margin-top: 7px;
    background: #c1c1c1;
}

.graph-arrow-down {
    margin: 254px 0 0 2px;
}

.hscroll {
    position: relative;
    display: flex;
    align-items: center;
    height: 12px;
    flex-shrink: 0;
    padding: 2px 0 0 21px;
    background: #f1f1f1;
}

.hscroll-thumb {
    width: 1190px;
    height: 10px;
    background: #c1c1c1;
}

.arrow-left {
    position: absolute;
    left: 6px;
    top: 2px;
    border-top: 5px solid transparent;
    border-bottom: 5px solid transparent;
    border-right: 5px solid #a3a3a3;
}

.arrow-right {
    position: absolute;
    right: 23px;
    top: 2px;
    border-top: 5px solid transparent;
    border-bottom: 5px solid transparent;
    border-left: 5px solid #505050;
}

.hscroll-corner {
    position: absolute;
    right: 0;
    top: 0;
    width: 16px;
    height: 12px;
    background: #dcdcdc;
}
```
